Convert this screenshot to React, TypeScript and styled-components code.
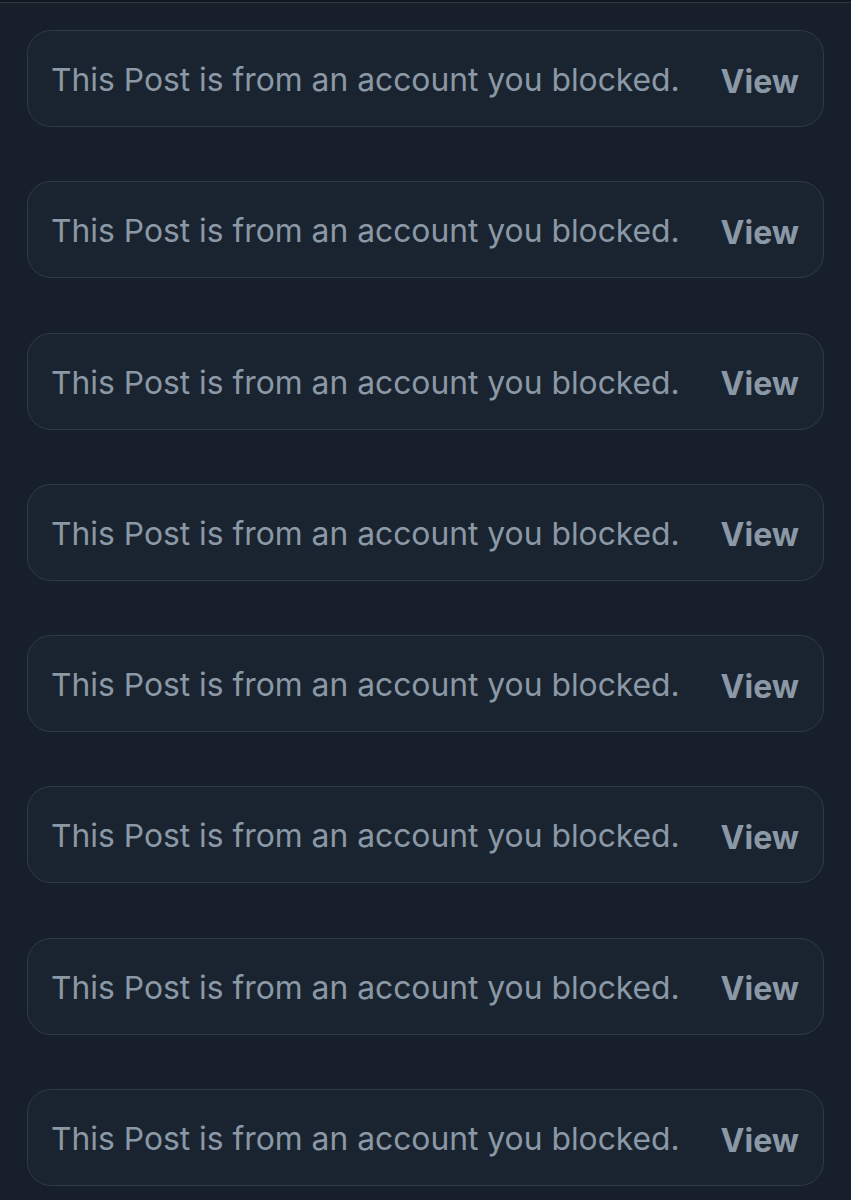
import React from "react";
import styled, { createGlobalStyle } from "styled-components";

const Global = createGlobalStyle`
  html, body { margin: 0; padding: 0; background: #17202a; }
  body { font-family: Inter, "Noto Sans", "Liberation Sans", sans-serif; }
`;

const Page = styled.div`
  min-height: 1200px;
  background: #17202a;
  box-sizing: border-box;
`;

const TopRule = styled.div`
  height: 2px;
  background: #121820;
  border-bottom: 1px solid #2d3944;
`;

const List = styled.div`
  display: flex;
  flex-direction: column;
  gap: 54.3px;
  padding: 27px 27px 0 27px;
`;

const Card = styled.div`
  box-sizing: border-box;
  height: 97px;
  width: 797px;
  display: flex;
  align-items: center;
  justify-content: space-between;
  padding: 2px 24px 0 23px;
  background: #1a2430;
  border: 1px solid #2e3a47;
  border-radius: 24px;
`;

const Message = styled.span`
  font-size: 31.8px;
  color: #8b98a5;
`;

const ViewLink = styled.span`
  font-size: 32px;
  font-weight: 700;
  color: #8b99a7;
  padding-top: 3px;
`;

export default function App() {
  const items = Array.from({ length: 8 }, (_, i) => i);
  return (
    <Page>
      <Global />
      <TopRule />
      <List>
        {items.map((i) => (
          <Card key={i}>
            <Message>This Post is from an account you blocked.</Message>
            <ViewLink>View</ViewLink>
          </Card>
        ))}
      </List>
    </Page>
  );
}
